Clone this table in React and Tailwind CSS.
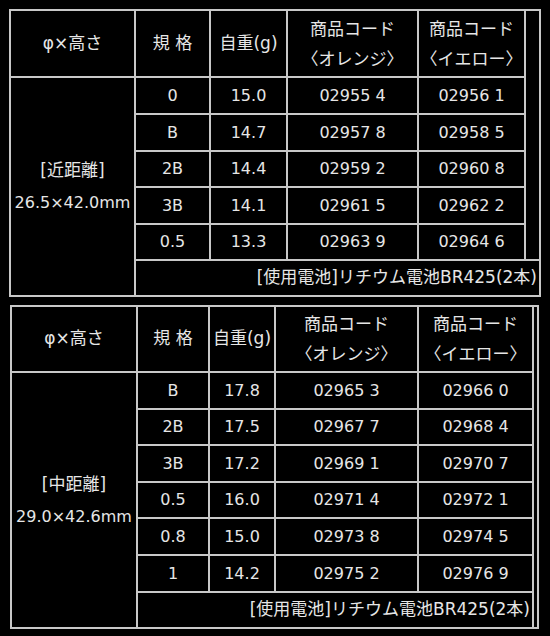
const FONT = { fontFamily: '"DejaVu Sans", "Noto Sans CJK JP", sans-serif' };

const near = {
  label: ['[近距離]', '26.5×42.0mm'],
  widths: [125, 75, 77, 131, 107, 15],
  heights: [37, 37, 36, 37, 36],
  rows: [
    ['0', '15.0', '02955 4', '02956 1'],
    ['B', '14.7', '02957 8', '02958 5'],
    ['2B', '14.4', '02959 2', '02960 8'],
    ['3B', '14.1', '02961 5', '02962 2'],
    ['0.5', '13.3', '02963 9', '02964 6'],
  ],
  header: 67,
  wide: true,
};

const mid = {
  label: ['[中距離]', '29.0×42.6mm'],
  widths: [126, 72, 66, 143, 115, 5],
  heights: [37, 36, 37, 36, 37, 37],
  rows: [
    ['B', '17.8', '02965 3', '02966 0'],
    ['2B', '17.5', '02967 7', '02968 4'],
    ['3B', '17.2', '02969 1', '02970 7'],
    ['0.5', '16.0', '02971 4', '02972 1'],
    ['0.8', '15.0', '02973 8', '02974 5'],
    ['1', '14.2', '02975 2', '02976 9'],
  ],
  header: 66,
  wide: false,
};

const cell = 'border-2 border-[#c8c8c8] text-center align-middle p-0 whitespace-nowrap';

function SpecTable({ data, className }) {
  const n = data.rows.length;
  return (
    <table className={`border-collapse table-fixed border-2 border-[#c8c8c8] ${className}`}>
      <colgroup>
        {data.widths.map((w, i) => (
          <col key={i} style={{ width: w }} />
        ))}
      </colgroup>
      <tbody>
        <tr style={{ height: data.header }} className="text-[17px]">
          <td className={cell}>φ×高さ</td>
          <td className={cell}>規 格</td>
          <td className={cell}>自重(g)</td>
          <td className={`${cell} leading-[30px]`}>
            商品コード
            <br />
            〈オレンジ〉
          </td>
          <td className={`${cell} leading-[30px]`}>
            商品コード
            <br />
            〈イエロー〉
          </td>
          <td rowSpan={data.wide ? n + 1 : n + 2} className="p-0 border-0" />
        </tr>
        {data.rows.map((r, i) => (
          <tr key={i} style={{ height: data.heights[i] }}>
            {i === 0 && (
              <td rowSpan={n + 1} className={`${cell} leading-[32px]`}>
                <span className="text-[17px]">{data.label[0]}</span>
                <br />
                {data.label[1]}
              </td>
            )}
            {r.map((v, j) => (
              <td key={j} className={cell}>
                {v}
              </td>
            ))}
          </tr>
        ))}
        <tr className="h-[36px]">
          <td colSpan={data.wide ? 5 : 4} className={`${cell} text-right text-[17px] pr-[2px]`}>
            [使用電池]リチウム電池BR425(2本)
          </td>
        </tr>
      </tbody>
    </table>
  );
}

export default function App() {
  return (
    <div className="w-[550px] h-[636px] bg-black text-[#e6e6e6] text-[16px] overflow-hidden" style={FONT}>
      <SpecTable data={near} className="ml-[9px] mt-[9px]" />
      <SpecTable data={mid} className="ml-[10px] mt-[8px]" />
    </div>
  );
}
